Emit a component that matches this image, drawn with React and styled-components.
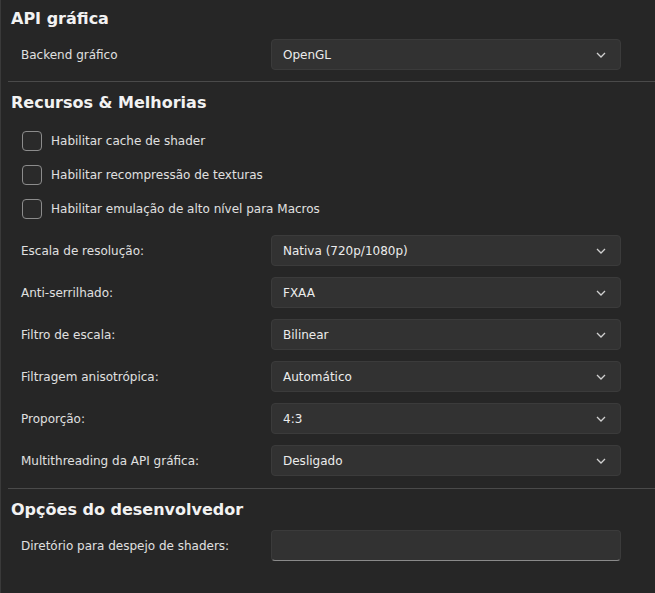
import React from "react";
import styled, { createGlobalStyle } from "styled-components";

const Global = createGlobalStyle`
  html, body { margin: 0; background: #262626; }
  body { font-family: "DejaVu Sans", Verdana, sans-serif; color: #e6e6e6; }
`;

const Page = styled.div`
  width: 655px; height: 593px; box-sizing: border-box;
  border-left: 1px solid #3a3a3a;
  background: #262626; overflow: hidden;
`;
const Section = styled.section`
  padding: ${p => p.$top}px 0 0 0;
`;
const Heading = styled.h2`
  margin: 0 0 0 10px; font-size: 16px; font-weight: bold; color: #f2f2f2;
  height: 22px; line-height: 22px;
`;
const Divider = styled.hr`
  margin: ${p => p.$top}px 0 0 7px; border: 0; border-top: 1px solid #4a4a4a;
`;
const Rows = styled.div`
  display: flex; flex-direction: column; gap: ${p => p.$gap}px;
  margin-top: ${p => p.$top}px;
`;
const Row = styled.div`
  display: grid; grid-template-columns: 250px 350px; align-items: center;
  padding-left: 20px; height: 31px;
`;
const Label = styled.span`font-size: 12px; color: #e0e0e0;`;
const Combo = styled.div`
  height: 31px; box-sizing: border-box; border: 1px solid #3b3b3b; border-radius: 4px;
  background: #323232; display: flex; align-items: center; justify-content: space-between;
  padding: 0 14px 0 11px; font-size: 12px; color: #ececec;
`;
const Input = styled.div`
  height: 31px; box-sizing: border-box; border: 1px solid #3b3b3b; border-bottom: 1px solid #8a8a8a;
  border-radius: 4px; background: #323232;
`;
const CheckRow = styled.label`
  display: flex; align-items: center; gap: 9px; padding-left: 21px; height: 20px;
  font-size: 12px; color: #e0e0e0;
`;
const Box = styled.span`
  width: 18px; height: 18px; border: 1px solid #8c8c8c; border-radius: 4px; background: #2a2a2a;
`;

const Chev = () => (
  <svg width="10" height="6" viewBox="0 0 10 6"><path d="M1 1l4 4 4-4" stroke="#d0d0d0" strokeWidth="1.3" fill="none"/></svg>
);

const combos = [
  ["Escala de resolução:", "Nativa (720p/1080p)"],
  ["Anti-serrilhado:", "FXAA"],
  ["Filtro de escala:", "Bilinear"],
  ["Filtragem anisotrópica:", "Automático"],
  ["Proporção:", "4:3"],
  ["Multithreading da API gráfica:", "Desligado"],
];

export default function App() {
  return (
    <Page>
      <Global />
      <Section $top={8}>
        <Heading>API gráfica</Heading>
        <Rows $top={9} $gap={0}>
          <Row><Label>Backend gráfico</Label><Combo>OpenGL<Chev /></Combo></Row>
        </Rows>
      </Section>
      <Divider $top={11} />
      <Section $top={10}>
        <Heading>Recursos &amp; Melhorias</Heading>
        <Rows $top={17} $gap={14}>
          <CheckRow><Box />Habilitar cache de shader</CheckRow>
          <CheckRow><Box />Habilitar recompressão de texturas</CheckRow>
          <CheckRow><Box />Habilitar emulação de alto nível para Macros</CheckRow>
        </Rows>
        <Rows $top={16} $gap={11}>
          {combos.map(([l, v]) => (
            <Row key={l}><Label>{l}</Label><Combo>{v}<Chev /></Combo></Row>
          ))}
        </Rows>
      </Section>
      <Divider $top={12} />
      <Section $top={10}>
        <Heading>Opções do desenvolvedor</Heading>
        <Rows $top={9} $gap={0}>
          <Row><Label>Diretório para despejo de shaders:</Label><Input /></Row>
        </Rows>
      </Section>
    </Page>
  );
}
